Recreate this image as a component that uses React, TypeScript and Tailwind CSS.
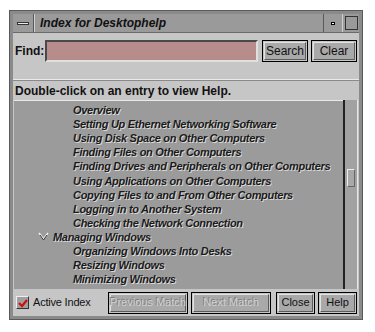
import React from 'react';

const items: { label: string; level: number; open?: boolean }[] = [
  { label: 'Overview', level: 2 },
  { label: 'Setting Up Ethernet Networking Software', level: 2 },
  { label: 'Using Disk Space on Other Computers', level: 2 },
  { label: 'Finding Files on Other Computers', level: 2 },
  { label: 'Finding Drives and Peripherals on Other Computers', level: 2 },
  { label: 'Using Applications on Other Computers', level: 2 },
  { label: 'Copying Files to and From Other Computers', level: 2 },
  { label: 'Logging in to Another System', level: 2 },
  { label: 'Checking the Network Connection', level: 2 },
  { label: 'Managing Windows', level: 1, open: true },
  { label: 'Organizing Windows Into Desks', level: 2 },
  { label: 'Resizing Windows', level: 2 },
  { label: 'Minimizing Windows', level: 2 },
];

const shadow = { textShadow: '1px 1px 0 #d8d8d8' };

const Btn = ({ label, w, disabled, small }: { label: string; w: string; disabled?: boolean; small?: boolean }) => (
  <div className={`${w} shrink-0 h-[22px] border border-black p-px`}>
    <div
      className={`h-full flex items-center justify-center whitespace-nowrap bg-[#a9a9a9] border-t border-l border-[#e2e2e2] border-r-[#5c5c5c] border-b-[#5c5c5c] border-r border-b ${
        small ? 'text-[11px]' : 'text-[12px]'
      } ${disabled ? 'text-[#d2d2d2]' : 'text-[#111]'}`}
      style={disabled ? { textShadow: '-1px -1px 0 #7a7a7a' } : undefined}
    >
      {label}
    </div>
  </div>
);

export default function App() {
  return (
    <div className="w-[375px] h-[332px] bg-white pt-[11px] pl-[10px]" style={{ fontFamily: '"Liberation Sans", Arial, sans-serif' }}>
      <div className="w-[352px] h-[308px] border-[3px] border-[#8a8a8a] bg-[#c6c6c6] flex flex-col outline outline-1 outline-[#5a5a5a]">
        {/* title bar */}
        <div className="h-[19px] shrink-0 flex bg-[#9a9a9a] border-b border-[#6a6a6a]">
          <div className="w-[21px] flex items-center justify-center border-r border-[#5a5a5a]">
            <div className="w-[12px] h-[3px] bg-[#e8e8e8] border border-[#333]" />
          </div>
          <div className="flex-1 flex items-center pl-[5px] border-l border-[#d0d0d0] text-[12px] italic font-bold text-[#111]">
            Index for Desktophelp
          </div>
          <div className="w-[19px] flex items-center justify-center border-l border-[#5a5a5a]">
            <div className="w-[4px] h-[3px] bg-white border border-black" />
          </div>
          <div className="w-[17px] flex items-center justify-center border-l border-[#d0d0d0]">
            <div className="w-[13px] h-[14px] border border-[#333] bg-[#9a9a9a]" />
          </div>
        </div>

        {/* find row */}
        <div className="h-[47px] shrink-0 pt-[7px] pl-[2px] pr-[2px] border-b border-[#eaeaea]">
          <div className="flex items-center">
            <span className="text-[12px] font-bold text-[#111] mr-[1px]">Find:</span>
            <div className="w-[213px] h-[22px] bg-[#b98c8c] border-2 border-t-[#4a4a4a] border-l-[#4a4a4a] border-b-[#e0e0e0] border-r-[#e0e0e0]" />
            <div className="ml-[4px] -mt-[1px]">
              <Btn label="Search" w="w-[46px]" />
            </div>
            <div className="ml-[3px] -mt-[1px]">
              <Btn label="Clear" w="w-[46px]" />
            </div>
          </div>
        </div>

        {/* caption */}
        <div className="h-[20px] shrink-0 flex items-center pl-[2px] text-[12px] font-bold text-[#111] border-t border-[#8a8a8a]">
          Double-click on an entry to view Help.
        </div>

        {/* list */}
        <div className="flex h-[189px] shrink-0 mx-[1px]">
          <div className="flex-1 bg-[#9b9b9b] border-t border-[#eaeaea] pt-[2px] overflow-hidden">
            {items.map((it) => (
              <div
                key={it.label}
                className="h-[14.1px] leading-[14px] flex items-center text-[11px] tracking-[-0.3px] font-bold italic text-[#1a1a1a] whitespace-nowrap"
                style={{ ...shadow, paddingLeft: it.level === 2 ? 59 : 24 }}
              >
                {it.open && (
                  <svg width="11" height="9" viewBox="0 0 11 9" className="mr-[4px]">
                    <path d="M1 1 L5.5 7 L10 1" fill="none" stroke="#f0f0f0" strokeWidth="1.5" />
                    <path d="M2 3 L5.5 8 L9 3" fill="none" stroke="#333" strokeWidth="1" />
                  </svg>
                )}
                {it.label}
              </div>
            ))}
          </div>
          <div className="w-[15px] bg-[#a2a2a2] border-l-2 border-[#222] border-r border-r-[#e6e6e6] flex flex-col pt-[69px] items-center">
            <div className="w-[8px] h-[18px] border border-[#eeeeee] border-b-[#666] border-r-[#666] bg-[#a8a8a8]" />
          </div>
        </div>

        {/* bottom row */}
        <div className="flex items-center flex-1 pl-[3px] pr-[2px]">
          <div className="w-[13px] h-[13px] shrink-0 bg-[#a0a0a0] border border-t-[#eee] border-l-[#eee] border-b-[#333] border-r-[#333] flex items-center justify-center">
            <svg width="10" height="10" viewBox="0 0 10 10">
              <path d="M1 5 L4 8 L9 2" fill="none" stroke="#d01010" strokeWidth="2.2" />
            </svg>
          </div>
          <span className="ml-[4px] text-[11px] tracking-[-0.2px] text-[#111] whitespace-nowrap">Active Index</span>
          <div className="ml-auto flex gap-[3px]">
            <Btn label="Previous Match" w="w-[80px]" disabled small />
            <Btn label="Next Match" w="w-[80px]" disabled small />
            <div className="ml-[2px]">
              <Btn label="Close" w="w-[39px]" small />
            </div>
            <Btn label="Help" w="w-[39px]" small />
          </div>
        </div>
      </div>
    </div>
  );
}
